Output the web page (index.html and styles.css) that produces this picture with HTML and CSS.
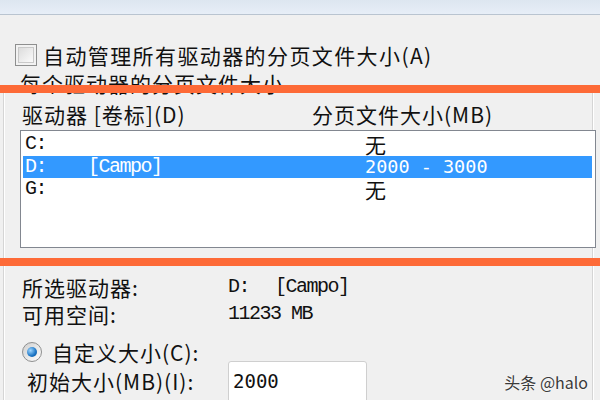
FILE: index.html
```html
<!DOCTYPE html>
<html lang="zh-CN">
<head>
    <meta charset="UTF-8" />
    <title>虚拟内存</title>
    <link rel="stylesheet" href="styles.css">
</head>
<body>
    <div class="titlebar"></div>

    <label class="auto-row">
        <span class="checkbox"></span>
        <span>自动管理所有驱动器的分页文件大小(A)</span>
    </label>
    <div class="caption">每个驱动器的分页文件大小</div>

    <div class="group">
        <div class="list-head">
            <span>驱动器 [卷标](D)</span>
            <span>分页文件大小(MB)</span>
        </div>
        <ul class="drive-list">
            <li><span class="mono">C:</span><span>无</span></li>
            <li class="selected"><span class="mono">D:<span class="volume">[Campo]</span></span><span class="size">2000 - 3000</span></li>
            <li><span class="mono">G:</span><span>无</span></li>
        </ul>

        <div class="info-row first">
            <span>所选驱动器:</span>
            <span class="mono">D:<span class="volume small">[Campo]</span></span>
        </div>
        <div class="info-row">
            <span>可用空间:</span>
            <span class="mono">11233 MB</span>
        </div>

        <label class="radio-row">
            <span class="radio"><span class="dot"></span></span>
            <span>自定义大小(C):</span>
        </label>
        <div class="size-row">
            <span class="size-label">初始大小(MB)(I):</span>
            <div class="size-input">2000</div>
        </div>
    </div>

    <div class="mark top-mark"></div>
    <div class="mark bottom-mark"></div>
    <div class="watermark">头条 @halo</div>
</body>
</html>
```

FILE: styles.css
```css
* {
    box-sizing: border-box;
    margin: 0;
    padding: 0;
}

body {
    width: 600px;
    height: 400px;
    overflow: hidden;
    position: relative;
    background: #f0f0f0;
    color: #111;
    font-family: "Noto Sans CJK SC", "Noto Sans", sans-serif;
    font-size: 21px;
    letter-spacing: 1px;
}

.titlebar {
    height: 15px;
    background: linear-gradient(to bottom, #dde6f0, #e7eef7);
    border-bottom: 1px solid #b9c4d0;
}

.auto-row {
    display: flex;
    align-items: center;
    gap: 6px;
    height: 24px;
    margin-top: 28px;
    padding-left: 15px;
    letter-spacing: 1.4px;
    line-height: 24px;
}

.checkbox {
    width: 22px;
    height: 22px;
    border: 1px solid #8e8f8f;
    background: linear-gradient(135deg, #d6d6d6, #f4f4f4 70%, #ffffff);
    box-shadow: inset 0 0 0 2px #f2f2f2, inset 0 0 0 3px #c9c9c9;
}

.caption {
    height: 24px;
    margin-top: 4px;
    padding-left: 20px;
    line-height: 24px;
}

.group {
    height: 320px;
    margin: -7px 7px 0 3px;
    padding-left: 16px;
    border-left: 1px solid #d5d5d5;
    border-right: 1px solid #d5d5d5;
    box-shadow: inset 1px 0 #ffffff, 1px 0 #ffffff;
}

.list-head {
    display: grid;
    grid-template-columns: 290px 1fr;
    padding: 14px 0 0 2px;
    line-height: 24px;
}

.drive-list {
    list-style: none;
    height: 118px;
    margin: 4px -4px 0 0;
    padding: 2px 3px 2px 2px;
    background: #ffffff;
    border: 1px solid #828790;
}

.drive-list li {
    display: grid;
    grid-template-columns: 340px 1fr;
    align-items: center;
    height: 22.5px;
    padding-left: 2px;
    line-height: 20px;
}

.drive-list li.selected {
    background: #3399ff;
    color: #ffffff;
}

.mono {
    font-family: "Liberation Mono", monospace;
    font-size: 20px;
    letter-spacing: -1.5px;
}

.volume {
    margin-left: 42px;
}

.volume.small {
    margin-left: 26px;
}

.size {
    font-family: "DejaVu Sans Mono", monospace;
    font-size: 18.5px;
    letter-spacing: 0;
}

.info-row {
    display: grid;
    grid-template-columns: 206px 1fr;
    margin-top: 3px;
    padding-left: 2px;
    line-height: 24px;
}

.info-row.first {
    margin-top: 27px;
}

.radio-row {
    display: flex;
    align-items: center;
    gap: 10px;
    height: 20px;
    margin-top: 16px;
    padding-left: 2px;
    line-height: 20px;
}

.radio {
    display: flex;
    align-items: center;
    justify-content: center;
    width: 20px;
    height: 20px;
    border: 1px solid #8e8f8f;
    border-radius: 50%;
    background: linear-gradient(135deg, #cfcfcf, #ffffff);
}

.dot {
    width: 10px;
    height: 10px;
    border-radius: 50%;
    background: radial-gradient(circle at 35% 35%, #9fd6ff, #1a74c4 60%, #0d4f90);
}

.size-row {
    display: grid;
    grid-template-columns: 206px 139px;
    margin-top: -1px;
    padding-left: 2px;
}

.size-label {
    padding: 8px 0 0 5px;
    line-height: 24px;
}

.size-input {
    height: 42px;
    padding: 7px 0 0 4px;
    background: #ffffff;
    border: 1px solid #cfcfcf;
    border-radius: 3px;
    font-family: "DejaVu Sans Mono", monospace;
    font-size: 19px;
    letter-spacing: 0;
    line-height: 24px;
}

.mark {
    position: absolute;
    left: 0;
    width: 600px;
    height: 8px;
    background: #fd6a37;
}

.top-mark {
    top: 85px;
}

.bottom-mark {
    top: 258px;
}

.watermark {
    position: absolute;
    right: 12px;
    bottom: 6px;
    color: #3a3a3a;
    font-size: 16px;
    letter-spacing: 0;
    text-shadow: 0 0 2px #ffffff;
}
```
